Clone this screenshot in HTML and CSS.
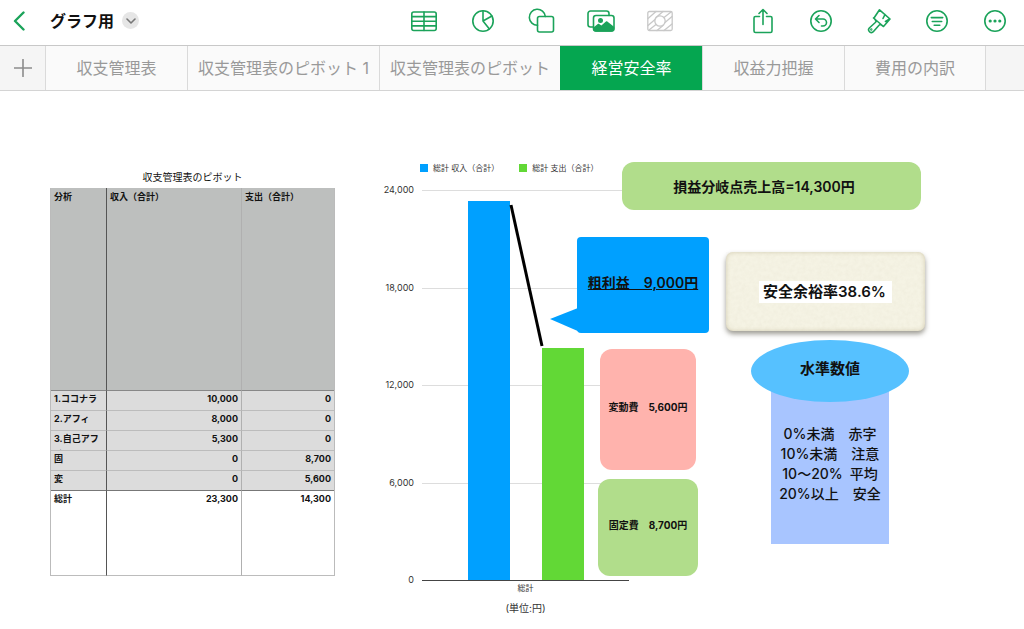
FILE: index.html
```
<!DOCTYPE html>
<html lang="ja">
<head>
<meta charset="utf-8">
<meta name="viewport" content="width=device-width, initial-scale=1">
<title>グラフ用</title>
<link rel="stylesheet" href="styles.css">
</head>
<body>
<header class="toolbar">
  <div class="doc">
    <button class="back" aria-label="戻る"><svg width="12" height="20" viewBox="0 0 12 20"><path d="M10.500 1.500 2 10l8.500 8.500"/></svg></button>
    <h1 class="doc-title">グラフ用</h1>
    <button class="doc-menu" aria-label="書類メニュー"><svg width="10" height="6" viewBox="0 0 10 6"><path d="M1 1l4 4 4-4"/></svg></button>
  </div>
  <div class="tools insert">
    <button aria-label="表"><svg width="28" height="26" viewBox="0 0 28 26"><rect x="1.800" y="4" width="24.400" height="18.500" rx="2"/><path d="M1.800 8.600h24.400M1.800 13.300h24.400M1.800 17.900h24.400M14 4v18.500"/></svg></button>
    <button aria-label="グラフ"><svg width="26" height="26" viewBox="0 0 26 26"><circle cx="13" cy="13" r="10.200"/><path d="M13 2.800V13l8.900-5M13 13l6.400 8"/></svg></button>
    <button aria-label="図形"><svg width="28" height="26" viewBox="0 0 28 26"><path d="M9.500 17.300A8 8 0 1 1 17.300 8.500"/><rect x="9.500" y="8.500" width="16" height="15.500" rx="2"/></svg></button>
    <button aria-label="メディア"><svg width="30" height="26" viewBox="0 0 30 26"><path d="M7.500 19H4.500a2.500 2.500 0 0 1-2.500-2.500v-11A2.500 2.500 0 0 1 4.500 3h16A2.500 2.500 0 0 1 23 5.500v2"/><rect x="7.500" y="7.500" width="20.500" height="15.500" rx="2.500"/><circle class="solid" cx="14.500" cy="12.500" r="1.700"/><path class="solid" d="M8 20l4.300-3.500 3 2L20.500 14l7 5.500v1.500a2 2 0 0 1-2 2h-15.500a2 2 0 0 1-2-2z"/></svg></button>
    <button aria-label="オブジェクト" disabled><svg width="28" height="26" viewBox="0 0 28 26"><rect x="1.800" y="3.500" width="24.400" height="19" rx="1.500"/><circle cx="14" cy="13" r="5.200"/><path d="M2 10.500 10 3.500M2 17.500 9 11.500M10 9.500 17 3.500M3 22 10 16.500M18 9.500 25 4M19 14.500 26 8.500M11 22.500l6-5M18 22.500l8-6.500"/></svg></button>
  </div>
  <div class="tools actions">
    <button aria-label="共有"><svg width="24" height="28" viewBox="0 0 24 28"><path d="M8.500 9.500H4.500a1.500 1.500 0 0 0-1.500 1.500v13A1.500 1.500 0 0 0 4.500 25.500h15A1.500 1.500 0 0 0 21 24V11a1.500 1.500 0 0 0-1.500-1.500h-4M12 17.500V2.500M8 6.500l4-4 4 4"/></svg></button>
    <button aria-label="取り消す"><svg width="24" height="24" viewBox="0 0 24 24"><circle cx="12" cy="12" r="10.200"/><path d="M10 6.500 6.500 10l3.500 3.500M6.800 10H14a3.500 3.500 0 0 1 0 7h-1.500"/></svg></button>
    <button aria-label="フォーマット"><svg width="26" height="26" viewBox="0 0 26 26"><path d="M13.500 1.800 24 11l-6.500 7.500-3.200-2.300-1.500 1.300-5.300 6a2.700 2.700 0 0 1-4.200-3.500l6-5.500 1-1.300-2.300-3.200zM7.500 10l10 8.500M19 6.500l-2 4M23.500 11l-4 2.500"/><circle class="solid" cx="5.300" cy="21.500" r=".4"/></svg></button>
    <button aria-label="整理"><svg width="24" height="24" viewBox="0 0 24 24"><circle cx="12" cy="12" r="10.200"/><path d="M6.300 8.600h11.400M7.300 12.500h9.400M9.200 16.300h5.600"/></svg></button>
    <button aria-label="その他"><svg width="24" height="24" viewBox="0 0 24 24"><circle cx="12" cy="12" r="10.200"/><circle class="solid" cx="7.200" cy="12" r=".8"/><circle class="solid" cx="12" cy="12" r=".8"/><circle class="solid" cx="16.800" cy="12" r=".8"/></svg></button>
  </div>
</header>
<nav class="tabs" aria-label="シート">
  <button class="add" aria-label="シートを追加"><svg width="18" height="18" viewBox="0 0 18 18"><path d="M9 0.500v17M0.500 9h17"/></svg></button>
  <button class="tab">収支管理表</button>
  <button class="tab">収支管理表のピボット 1</button>
  <button class="tab">収支管理表のピボット</button>
  <button class="tab active" aria-current="page">経営安全率</button>
  <button class="tab">収益力把握</button>
  <button class="tab">費用の内訳</button>
</nav>
<main class="sheet">
  <table class="pivot">
    <caption>収支管理表のピボット</caption>
    <colgroup><col class="col-name"><col class="col-in"><col class="col-out"></colgroup>
    <thead><tr><th scope="col">分析</th><th scope="col">収入（合計）</th><th scope="col">支出（合計）</th></tr></thead>
    <tbody>
      <tr><th scope="row">1.ココナラ</th><td>10,000</td><td>0</td></tr>
      <tr><th scope="row">2.アフィ</th><td>8,000</td><td>0</td></tr>
      <tr><th scope="row"><div class="clip">3.自己アフィ</div></th><td>5,300</td><td>0</td></tr>
      <tr><th scope="row">固</th><td>0</td><td>8,700</td></tr>
      <tr><th scope="row">変</th><td>0</td><td>5,600</td></tr>
    </tbody>
    <tfoot><tr><th scope="row">総計</th><td>23,300</td><td>14,300</td></tr></tfoot>
  </table>

  <figure class="chart">
    <div class="legend">
      <span class="key income">総計 収入（合計）</span>
      <span class="key expense">総計 支出（合計）</span>
    </div>
    <div class="chart-body">
      <div class="axis"><span>24,000</span><span>18,000</span><span>12,000</span><span>6,000</span><span>0</span></div>
      <div class="plot">
        <div class="lines"><i></i><i></i><i></i><i></i></div>
        <div class="bars">
          <div class="bar income" style="height:97.08%"></div>
          <div class="bar expense" style="height:59.58%"></div>
        </div>
      </div>
    </div>
    <figcaption><span class="category">総計</span><span class="unit">(単位:円)</span></figcaption>
  </figure>

  <svg class="slope" width="40" height="146" viewBox="0 0 40 146"><path d="M4 2 35 143"/></svg>

  <div class="shape breakeven">損益分岐点売上高=14,300円</div>
  <div class="shape profit"><svg class="tail" width="32" height="26" viewBox="0 0 32 26"><path d="M0 12 28 1h4v24h-2z"/></svg>粗利益　9,000円</div>
  <div class="shape variable">変動費　5,600円</div>
  <div class="shape fixed">固定費　8,700円</div>
  <div class="shape paper">
    <svg class="grain" width="100%" height="100%" aria-hidden="true"><filter id="fiber"><feTurbulence type="fractalNoise" baseFrequency=".25" numOctaves="3"/><feColorMatrix values="0 0 0 0 .6  0 0 0 0 .55  0 0 0 0 .4  .5 0 0 0 -.16"/></filter><rect width="100%" height="100%" filter="url(#fiber)"/></svg>
    <span class="mark">安全余裕率38.6%</span>
  </div>
  <div class="shape levels">
    <p>0%未満　赤字</p><p>10%未満　注意</p><p>10〜20%&ensp;平均</p><p>20%以上　安全</p>
  </div>
  <div class="shape levels-title">水準数値</div>
</main>
</body>
</html>
```
FILE: styles.css
```
* { box-sizing: border-box; }
body {
  margin: 0;
  background: #fff;
  color: #111;
  font-family: Inter, "Noto Sans CJK JP", sans-serif;
}
button {
  margin: 0;
  padding: 0;
  border: 0;
  background: none;
  font: inherit;
  color: inherit;
}
svg { display: block; fill: none; stroke: currentColor; stroke-linecap: round; stroke-linejoin: round; }

/* Toolbar */
.toolbar {
  display: flex;
  height: 46px;
  padding-bottom: 4px;
  border-bottom: 1px solid #c8c8c8;
  color: #1ba35a;
}
.toolbar svg { stroke-width: 1.6; }
.doc { display: flex; flex: 1; align-items: center; padding-left: 13px; }
.doc .back svg { stroke-width: 2.4; }
.doc-title { margin: 0 8px 0 25px; color: #111; font-size: 16px; line-height: 24px; font-weight: 700; white-space: nowrap; }
.doc-menu {
  display: grid;
  place-items: center;
  width: 17px;
  height: 17px;
  border-radius: 50%;
  background: #e6e6e6;
  color: #777;
}
.tools { display: flex; }
.tools button { display: grid; place-items: center; width: 58px; }
.insert { margin-right: 45px; }
.insert button { width: 59px; }
.tools button:disabled { color: #c8c8c8; }
.tools button:disabled svg { stroke-width: 1.3; }
.solid { fill: currentColor; }

/* Sheet tabs */
.tabs { display: flex; height: 45px; border-bottom: 1px solid #d4d4d4; background: #f5f5f5; }
.add { display: grid; place-items: center; width: 45px; color: #8c8c8c; }
.add svg { stroke-width: 1.6; }
.tab {
  min-width: 142px;
  padding: 0 10px 2px;
  border-left: 1px solid #dadada;
  background: #fafafa;
  color: #999;
  font-size: 16px;
  font-weight: 400;
  white-space: nowrap;
}
.tab:last-child { border-right: 1px solid #dadada; }
.tab.active { border-color: #05a650; background: #05a650; color: #fff; }

/* Free canvas of the sheet */
.sheet { position: relative; min-height: 538px; }

.pivot {
  position: absolute;
  left: 50px;
  top: 77px;
  width: 285px;
  table-layout: fixed;
  border-spacing: 0;
  border-right: 1px solid #bbb;
  border-left: 1px solid #bbb;
  font-size: 9px;
  line-height: 13px;
  font-weight: 700;
}
.pivot caption { height: 20px; font-size: 10px; line-height: 19px; font-weight: 400; }
.col-name { width: 56px; }
.col-in { width: 135px; }
.pivot th, .pivot td {
  height: 20px;
  padding: 1px 3px;
  border-bottom: 1px solid #bcbcbc;
  text-align: right;
  vertical-align: top;
}
.pivot th { text-align: left; }
.pivot tr > :first-child { border-right: 1px solid #555; }
.pivot tr > :nth-child(2) { border-right: 1px solid #b0b0b0; }
.pivot thead th { height: 203px; padding-top: 2px; background: #bdbfbe; border-bottom-color: #888; }
.pivot tbody { background: #dcdcdc; }
.pivot tbody tr:last-child > * { border-bottom-color: #777; }
.pivot tfoot th, .pivot tfoot td { height: 85px; }
.clip { height: 18px; margin-bottom: -1px; overflow: hidden; word-break: break-all; }

.chart {
  position: absolute;
  left: 374px;
  top: 69px;
  width: 255px;
  margin: 0;
  color: #333;
  font-size: 9px;
  line-height: 12px;
}
.legend { display: flex; gap: 20px; height: 16px; margin: 0 0 8px 46px; align-items: center; font-size: 8px; white-space: nowrap; }
.key { display: flex; align-items: center; gap: 5px; }
.key::before { content: ""; width: 8px; height: 8px; background: #00a0ff; }
.key.expense::before { background: #62d836; }
.chart-body { display: flex; gap: 8px; }
.axis { display: flex; flex-direction: column; justify-content: space-between; width: 40px; height: 402px; text-align: right; }
.plot { display: grid; flex: 1; height: 391px; margin-top: 6px; border-bottom: 1px solid #444; }
.lines, .bars { grid-area: 1 / 1; }
.lines { display: grid; grid-template-rows: repeat(4, 1fr); }
.lines i { border-top: 1px solid #ddd; }
.bars { display: flex; align-items: flex-end; justify-content: center; gap: 32px; }
.bar { width: 42px; }
.bar.income { background: #00a0ff; }
.bar.expense { background: #62d836; }
.chart figcaption { display: flex; flex-direction: column; gap: 8px; margin-top: -4px; padding-left: 48px; text-align: center; }
.category { font-size: 8px; }
.unit { font-size: 10px; }

.slope { position: absolute; left: 507px; top: 112px; color: #000; stroke-width: 3; stroke-linecap: butt; }

.shape {
  position: absolute;
  display: flex;
  align-items: center;
  justify-content: center;
  border-radius: 12px;
  font-size: 14px;
  font-weight: 600;
  white-space: nowrap;
}
.breakeven { left: 622px; top: 71px; width: 299px; height: 48px; padding-right: 15px; background: #b1dd8b; }
.profit {
  left: 577px; top: 146px; width: 132px; height: 96px;
  padding-bottom: 6px;
  border-radius: 4px;
  background: #00a0ff;
  text-decoration: underline;
}
.tail { position: absolute; left: -27px; bottom: 0; fill: #00a0ff; stroke: none; }
.variable { left: 600px; top: 258px; width: 96px; height: 121px; padding-bottom: 6px; background: #ffb3ad; font-size: 10px; font-weight: 700; }
.fixed { left: 598px; top: 388px; width: 100px; height: 97px; padding-bottom: 6px; background: #b1dd8b; font-size: 10px; font-weight: 700; }
.paper {
  left: 726px; top: 161px; width: 199px; height: 79px;
  border-radius: 7px;
  background: #f5f3e4;
  box-shadow: 0 3px 5px rgba(60, 55, 40, .5), inset 0 0 4px rgba(170, 155, 110, .45);
  font-size: 15px;
}
.grain { position: absolute; inset: 0; opacity: .35; stroke: none; }
.mark { position: relative; padding: 0 6px 0 4px; background: #fff; line-height: 22px; }
.levels {
  left: 771px; top: 280px; width: 118px; height: 173px;
  flex-direction: column;
  justify-content: flex-start;
  padding-top: 53px;
  border-radius: 0;
  background: #a8c5ff;
  line-height: 20px;
  font-weight: 500;
}
.levels p { margin: 0; }
.levels-title { left: 751px; top: 249px; width: 158px; height: 62px; padding-bottom: 8px; border-radius: 50%; background: #56c1ff; font-size: 15px; }
```
